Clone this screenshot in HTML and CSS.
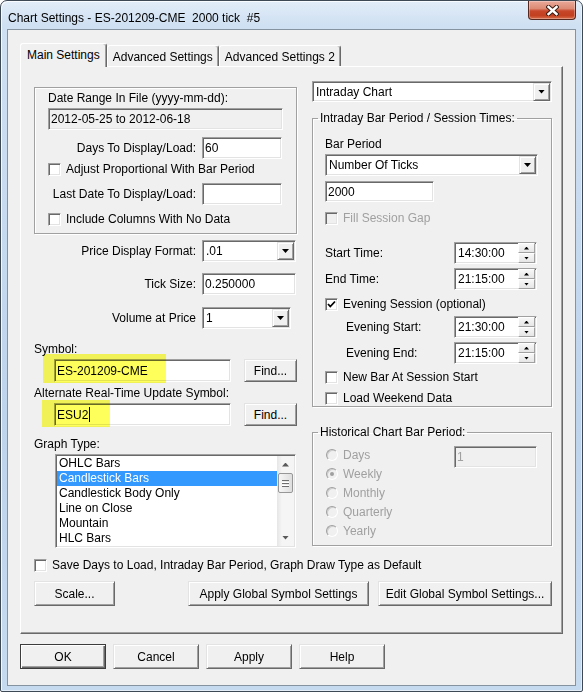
FILE: index.html
```html
<!DOCTYPE html>
<html lang="en">
<head>
  <meta charset="UTF-8">
  <meta name="viewport" content="width=device-width, initial-scale=1.0">
  <title>Chart Settings</title>
  <link rel="stylesheet" href="styles.css">
</head>
<body>
  <div class="window">
    <div class="titlebar">
      <span class="title">Chart Settings - ES-201209-CME  2000 tick  #5</span>
      <button class="close-btn" aria-label="Close">
        <svg width="13" height="11" viewBox="0 0 13 11">
          <path d="M2.5 2 L10.5 9 M10.5 2 L2.5 9" stroke="#3b1c14" stroke-width="4.4" stroke-linecap="square" fill="none"/>
          <path d="M2.5 2 L10.5 9 M10.5 2 L2.5 9" stroke="#fff" stroke-width="2.4" stroke-linecap="square" fill="none"/>
        </svg>
      </button>
    </div>

    <div class="client">
      <div class="tabs">
        <span class="tab active">Main Settings</span>
        <span class="tab">Advanced Settings</span>
        <span class="tab">Advanced Settings 2</span>
      </div>

      <div class="panel">
        <!-- left column -->
        <div class="left-col">
          <div class="group">
            <div class="label">Date Range In File (yyyy-mm-dd):</div>
            <div class="field readonly mt3">2012-05-25 to 2012-06-18</div>
            <div class="pair mt7">
              <span>Days To Display/Load:</span>
              <div class="field">60</div>
            </div>
            <div class="check mt3"><span class="box"></span>Adjust Proportional With Bar Period</div>
            <div class="pair mt7">
              <span>Last Date To Display/Load:</span>
              <div class="field"></div>
            </div>
            <div class="check mt7"><span class="box"></span>Include Columns With No Data</div>
          </div>

          <div class="form-row mt6">
            <span>Price Display Format:</span>
            <div class="field select w94"><span>.01</span><span class="drop"></span></div>
          </div>
          <div class="form-row mt11">
            <span>Tick Size:</span>
            <div class="field w94">0.250000</div>
          </div>
          <div class="form-row mt12">
            <span>Volume at Price</span>
            <div class="field select w89"><span>1</span><span class="drop"></span></div>
          </div>

          <div class="label mt13">Symbol:</div>
          <div class="sym-row mt3">
            <div class="field sym-field">ES-201209-CME</div>
            <button class="btn find-btn">Find...</button>
            <span class="marker marker-symbol"></span>
          </div>
          <div class="label mt4">Alternate Real-Time Update Symbol:</div>
          <div class="sym-row mt3">
            <div class="field sym-field">ESU2<span class="caret"></span></div>
            <button class="btn find-btn">Find...</button>
            <span class="marker marker-alt"></span>
          </div>

          <div class="label mt11">Graph Type:</div>
          <div class="listbox mt3">
            <ul>
              <li>OHLC Bars</li>
              <li class="selected">Candlestick Bars</li>
              <li>Candlestick Body Only</li>
              <li>Line on Close</li>
              <li>Mountain</li>
              <li>HLC Bars</li>
            </ul>
            <div class="vscroll">
              <span class="sb-arrow up"></span>
              <span class="sb-thumb"></span>
              <span class="sb-track"></span>
              <span class="sb-arrow down"></span>
            </div>
          </div>
        </div>

        <!-- right column -->
        <div class="right-col">
          <div class="field select chart-type"><span>Intraday Chart</span><span class="drop"></span></div>

          <fieldset class="session">
            <legend>Intraday Bar Period / Session Times:</legend>
            <div class="label mt12">Bar Period</div>
            <div class="field select bar-type mt3"><span>Number Of Ticks</span><span class="drop"></span></div>
            <div class="field bar-value mt5">2000</div>
            <div class="check disabled mt9"><span class="box"></span>Fill Session Gap</div>

            <div class="time-row mt17">
              <span>Start Time:</span>
              <div class="field spin"><span>14:30:00</span><span class="spin-btns"><i class="up"></i><i class="down"></i></span></div>
            </div>
            <div class="time-row mt4">
              <span>End Time:</span>
              <div class="field spin"><span>21:15:00</span><span class="spin-btns"><i class="up"></i><i class="down"></i></span></div>
            </div>
            <div class="check mt7">
              <span class="box">
                <svg width="11" height="11" viewBox="0 0 11 11"><polyline points="2,5 4.3,7.5 9,2.5" fill="none" stroke="#000" stroke-width="1.8"/></svg>
              </span>Evening Session (optional)
            </div>
            <div class="time-row indent mt5">
              <span>Evening Start:</span>
              <div class="field spin"><span>21:30:00</span><span class="spin-btns"><i class="up"></i><i class="down"></i></span></div>
            </div>
            <div class="time-row indent mt4">
              <span>Evening End:</span>
              <div class="field spin"><span>21:15:00</span><span class="spin-btns"><i class="up"></i><i class="down"></i></span></div>
            </div>
            <div class="check mt6"><span class="box"></span>New Bar At Session Start</div>
            <div class="check mt7"><span class="box"></span>Load Weekend Data</div>
          </fieldset>

          <fieldset class="historical">
            <legend>Historical Chart Bar Period:</legend>
            <div class="hist-body">
              <div class="radios">
                <div class="radio-row"><span class="radio"></span>Days</div>
                <div class="radio-row"><span class="radio on"></span>Weekly</div>
                <div class="radio-row"><span class="radio"></span>Monthly</div>
                <div class="radio-row"><span class="radio"></span>Quarterly</div>
                <div class="radio-row"><span class="radio"></span>Yearly</div>
              </div>
              <div class="field readonly disabled-field">1</div>
            </div>
          </fieldset>
        </div>

        <div class="panel-foot">
          <div class="check"><span class="box"></span>Save Days to Load, Intraday Bar Period, Graph Draw Type as Default</div>
          <div class="foot-buttons">
            <button class="btn scale-btn">Scale...</button>
            <button class="btn apply-global">Apply Global Symbol Settings</button>
            <button class="btn edit-global">Edit Global Symbol Settings...</button>
          </div>
        </div>
      </div>

      <div class="dialog-buttons">
        <button class="btn default">OK</button>
        <button class="btn">Cancel</button>
        <button class="btn">Apply</button>
        <button class="btn">Help</button>
      </div>
    </div>
  </div>
</body>
</html>
```

FILE: styles.css
```css
body {
  margin: 0;
  font-family: "Liberation Sans", Arial, sans-serif;
  font-size: 12px;
  color: #000;
  background: #fff;
}

/* window frame */
.window {
  box-sizing: border-box;
  width: 583px;
  height: 692px;
  border: 1px solid #3e4956;
  border-radius: 7px 7px 2px 2px;
  background: linear-gradient(180deg, #e2edf8 0, #cfe0f2 24px, #bed4ec 60%, #c6daef 100%);
  box-shadow: inset 1px 1px 0 rgba(255, 255, 255, .8), inset -1px -1px 0 rgba(255, 255, 255, .5);
  padding: 0 6px 5px;
  display: flex;
  flex-direction: column;
}

.titlebar {
  height: 28px;
  display: flex;
  justify-content: space-between;
  align-items: flex-start;
}

.title {
  white-space: pre;
  line-height: 14px;
  margin: 10px 0 0 1px;
}

.close-btn {
  box-sizing: border-box;
  width: 48px;
  height: 19px;
  padding: 0;
  border: 1px solid #55291f;
  border-top: none;
  border-radius: 0 0 4px 4px;
  background: linear-gradient(180deg, #eaa999 0, #dc8a74 42%, #c8472a 55%, #c23f1f 80%, #d86e4c 100%);
  box-shadow: inset 0 0 0 1px rgba(255, 255, 255, .3);
  display: flex;
  align-items: center;
  justify-content: center;
}

.client {
  flex: 1;
  border: 1px solid #84939f;
  background: #f0f0f0;
  padding: 13px 12px 0;
}

/* tabs */
.tabs {
  display: flex;
  align-items: flex-end;
  height: 23px;
}

.tab {
  box-sizing: border-box;
  height: 21px;
  padding: 4px 5px 0;
  line-height: 14px;
  border: 1px solid;
  border-color: #fff #696969 transparent #fff;
  border-bottom: 0;
  border-radius: 3px 3px 0 0;
  box-shadow: inset -1px 0 0 #a0a0a0;
  white-space: nowrap;
}

.tab.active {
  height: 24px;
  padding: 4px 6px 0;
  margin-bottom: -1px;
  position: relative;
  z-index: 1;
  background: #f0f0f0;
}

.panel {
  box-sizing: border-box;
  height: 568px;
  border: 1px solid;
  border-color: #fff #696969 #696969 #fff;
  box-shadow: inset -1px -1px 0 #a0a0a0;
  padding: 14px 0 0 13px;
  display: grid;
  grid-template-columns: 263px 240px;
  column-gap: 15px;
  align-content: start;
  align-items: start;
}

/* spacing helpers */
.mt3 { margin-top: 3px; }
.mt4 { margin-top: 4px; }
.mt5 { margin-top: 5px; }
.mt6 { margin-top: 6px; }
.mt7 { margin-top: 7px; }
.mt9 { margin-top: 9px; }
.mt11 { margin-top: 11px; }
.mt12 { margin-top: 12px; }
.mt13 { margin-top: 13px; }
.mt17 { margin-top: 17px; }

.label {
  line-height: 14px;
  height: 14px;
  white-space: nowrap;
}

/* sunken edit field */
.field {
  box-sizing: border-box;
  height: 22px;
  border: 1px solid;
  border-color: #a0a0a0 #fff #fff #a0a0a0;
  box-shadow: inset 1px 1px 0 #696969, inset -1px -1px 0 #e3e3e3;
  background: #fff;
  padding: 0 2px;
  display: flex;
  align-items: center;
  line-height: 14px;
  white-space: nowrap;
  overflow: hidden;
}

.readonly { background: #f0f0f0; }

.select {
  padding: 1px 1px 1px 3px;
  justify-content: space-between;
}

.drop {
  box-sizing: border-box;
  width: 17px;
  height: 18px;
  border: 1px solid;
  border-color: #e3e3e3 #696969 #696969 #e3e3e3;
  box-shadow: inset 1px 1px 0 #fff, inset -1px -1px 0 #a0a0a0;
  background: #f0f0f0;
  display: flex;
  align-items: center;
  justify-content: center;
  flex: none;
}

.drop::before {
  content: "";
  width: 7px;
  height: 4px;
  background: #000;
  clip-path: polygon(0 0, 100% 0, 50% 100%);
}

.w94 { width: 94px; }
.w89 { width: 89px; }

/* raised push button */
.btn {
  box-sizing: border-box;
  height: 25px;
  padding: 0;
  font: inherit;
  color: #000;
  border: 1px solid;
  border-color: #e3e3e3 #696969 #696969 #e3e3e3;
  box-shadow: inset 1px 1px 0 #fff, inset -1px -1px 0 #a0a0a0;
  background: #f0f0f0;
}

.btn.default {
  border-color: #3c3c3c;
  box-shadow: inset 1px 1px 0 #fff, inset -1px -1px 0 #696969, inset -2px -2px 0 #a0a0a0;
}

/* checkbox */
.check {
  display: flex;
  align-items: center;
  gap: 5px;
  height: 14px;
  line-height: 14px;
  white-space: nowrap;
}

.box {
  box-sizing: border-box;
  width: 13px;
  height: 13px;
  flex: none;
  border: 1px solid;
  border-color: #a0a0a0 #fff #fff #a0a0a0;
  box-shadow: inset 1px 1px 0 #696969, inset -1px -1px 0 #e3e3e3;
  background: #fff;
  display: flex;
  align-items: center;
  justify-content: center;
}

.check.disabled { color: #a0a0a0; }
.check.disabled .box { background: #f0f0f0; }

/* left column */
.left-col { padding-top: 6px; }

.group {
  border: 1px solid #a0a0a0;
  box-shadow: inset 1px 1px 0 #fff, 1px 1px 0 #fff;
  padding: 3px 13px 7px;
}

.pair {
  display: grid;
  grid-template-columns: 148px 80px;
  column-gap: 6px;
  align-items: center;
}

.pair > span {
  text-align: right;
  white-space: nowrap;
}

.form-row {
  display: grid;
  grid-template-columns: 162px auto;
  column-gap: 6px;
  align-items: center;
  justify-items: start;
}

.form-row > span {
  justify-self: end;
  white-space: nowrap;
}

.sym-row {
  position: relative;
  display: flex;
  gap: 13px;
  padding-left: 20px;
  height: 23px;
}

.sym-field {
  width: 177px;
  height: 23px;
}

.find-btn {
  width: 53px;
  height: 23px;
}

.caret {
  width: 1px;
  height: 15px;
  background: #000;
  margin-left: 1px;
}

/* yellow marker strokes laid over the symbol boxes */
.marker {
  position: absolute;
  background: #ffff5c;
  mix-blend-mode: multiply;
  pointer-events: none;
}

.marker-symbol { left: 9px; top: -5px; width: 123px; height: 29px; }
.marker-alt { left: 8px; top: -3px; width: 68px; height: 27px; }

.listbox {
  box-sizing: border-box;
  width: 241px;
  height: 94px;
  margin-left: 21px;
  border: 1px solid;
  border-color: #a0a0a0 #fff #fff #a0a0a0;
  box-shadow: inset 1px 1px 0 #696969, inset -1px -1px 0 #e3e3e3;
  background: #fff;
  padding: 1px;
  display: flex;
}

.listbox ul {
  list-style: none;
  margin: 0;
  padding: 0;
  flex: 1;
}

.listbox li {
  height: 15px;
  line-height: 15px;
  padding-left: 2px;
  white-space: nowrap;
}

.listbox li.selected {
  background: #3399ff;
  color: #fff;
}

.vscroll {
  width: 17px;
  display: flex;
  flex-direction: column;
  background: linear-gradient(90deg, #e6e6e6 0, #f5f5f5 30%, #f5f5f5 100%);
}

.sb-arrow {
  height: 17px;
  display: flex;
  align-items: center;
  justify-content: center;
  flex: none;
}

.sb-arrow::before {
  content: "";
  width: 7px;
  height: 4px;
  background: #5a5a5a;
}

.sb-arrow.up::before { clip-path: polygon(50% 0, 100% 100%, 0 100%); }
.sb-arrow.down::before { clip-path: polygon(0 0, 100% 0, 50% 100%); }

.sb-thumb {
  box-sizing: border-box;
  height: 20px;
  margin: 0 1px;
  border: 1px solid #979797;
  border-radius: 2px;
  background: linear-gradient(90deg, #f6f6f6, #dedede);
  display: flex;
  align-items: center;
  justify-content: center;
  flex: none;
}

.sb-thumb::before {
  content: "";
  width: 7px;
  height: 7px;
  background: repeating-linear-gradient(180deg, #6e6e6e 0 1px, transparent 1px 2px, #fff 2px 3px);
}

.sb-track { flex: 1; }

/* right column */
.chart-type {
  width: 240px;
  height: 21px;
}

fieldset {
  margin: 0;
  min-width: 0;
  border: 1px solid #a0a0a0;
  box-shadow: inset 1px 1px 0 #fff, 1px 1px 0 #fff;
  padding: 0 12px;
}

legend {
  padding: 0 2px;
  margin-left: -7px;
  line-height: 14px;
  white-space: nowrap;
}

.session {
  margin-top: 9px;
  padding-bottom: 1px;
}

.bar-type { width: 213px; }

.bar-value {
  width: 109px;
  height: 21px;
}

.time-row {
  display: grid;
  grid-template-columns: 129px 83px;
  align-items: center;
  height: 22px;
}

.time-row.indent > span { padding-left: 21px; }

.spin {
  padding: 1px 1px 1px 3px;
  justify-content: space-between;
}

.spin-btns {
  width: 17px;
  height: 20px;
  display: flex;
  flex-direction: column;
  flex: none;
}

.spin-btns i {
  box-sizing: border-box;
  flex: 1;
  border: 1px solid;
  border-color: #fff #a0a0a0 #a0a0a0 #fff;
  background: linear-gradient(180deg, #f7f7f7, #e6e6e6);
  display: flex;
  align-items: center;
  justify-content: center;
}

.spin-btns i::before {
  content: "";
  width: 5px;
  height: 3px;
  background: #000;
}

.spin-btns .up::before { clip-path: polygon(50% 0, 100% 100%, 0 100%); }
.spin-btns .down::before { clip-path: polygon(0 0, 100% 0, 50% 100%); }

.historical {
  margin-top: 18px;
  padding-bottom: 5px;
}

.hist-body {
  display: flex;
  margin-top: 6px;
}

.radios { width: 129px; }

.radio-row {
  display: flex;
  align-items: center;
  gap: 5px;
  height: 19px;
  color: #a0a0a0;
}

.radio {
  box-sizing: border-box;
  width: 12px;
  height: 12px;
  margin-left: 1px;
  border-radius: 50%;
  border: 1px solid;
  border-color: #a0a0a0 #fff #fff #a0a0a0;
  box-shadow: inset 1px 1px 0 #cfcfcf;
  background: #f0f0f0;
  display: flex;
  align-items: center;
  justify-content: center;
}

.radio.on::after {
  content: "";
  width: 4px;
  height: 4px;
  border-radius: 50%;
  background: #a0a0a0;
}

.disabled-field {
  width: 83px;
  margin-top: 1px;
  color: #a0a0a0;
}

/* bottom of the tab page */
.panel-foot {
  grid-column: 1 / -1;
  margin-top: 10px;
}

.foot-buttons {
  display: flex;
  margin-top: 9px;
}

.scale-btn { width: 81px; }
.apply-global { width: 181px; margin-left: auto; }
.edit-global { width: 174px; margin-left: 9px; }

.dialog-buttons {
  display: flex;
  gap: 7px;
  margin-top: 10px;
}

.dialog-buttons .btn { width: 86px; }
```
